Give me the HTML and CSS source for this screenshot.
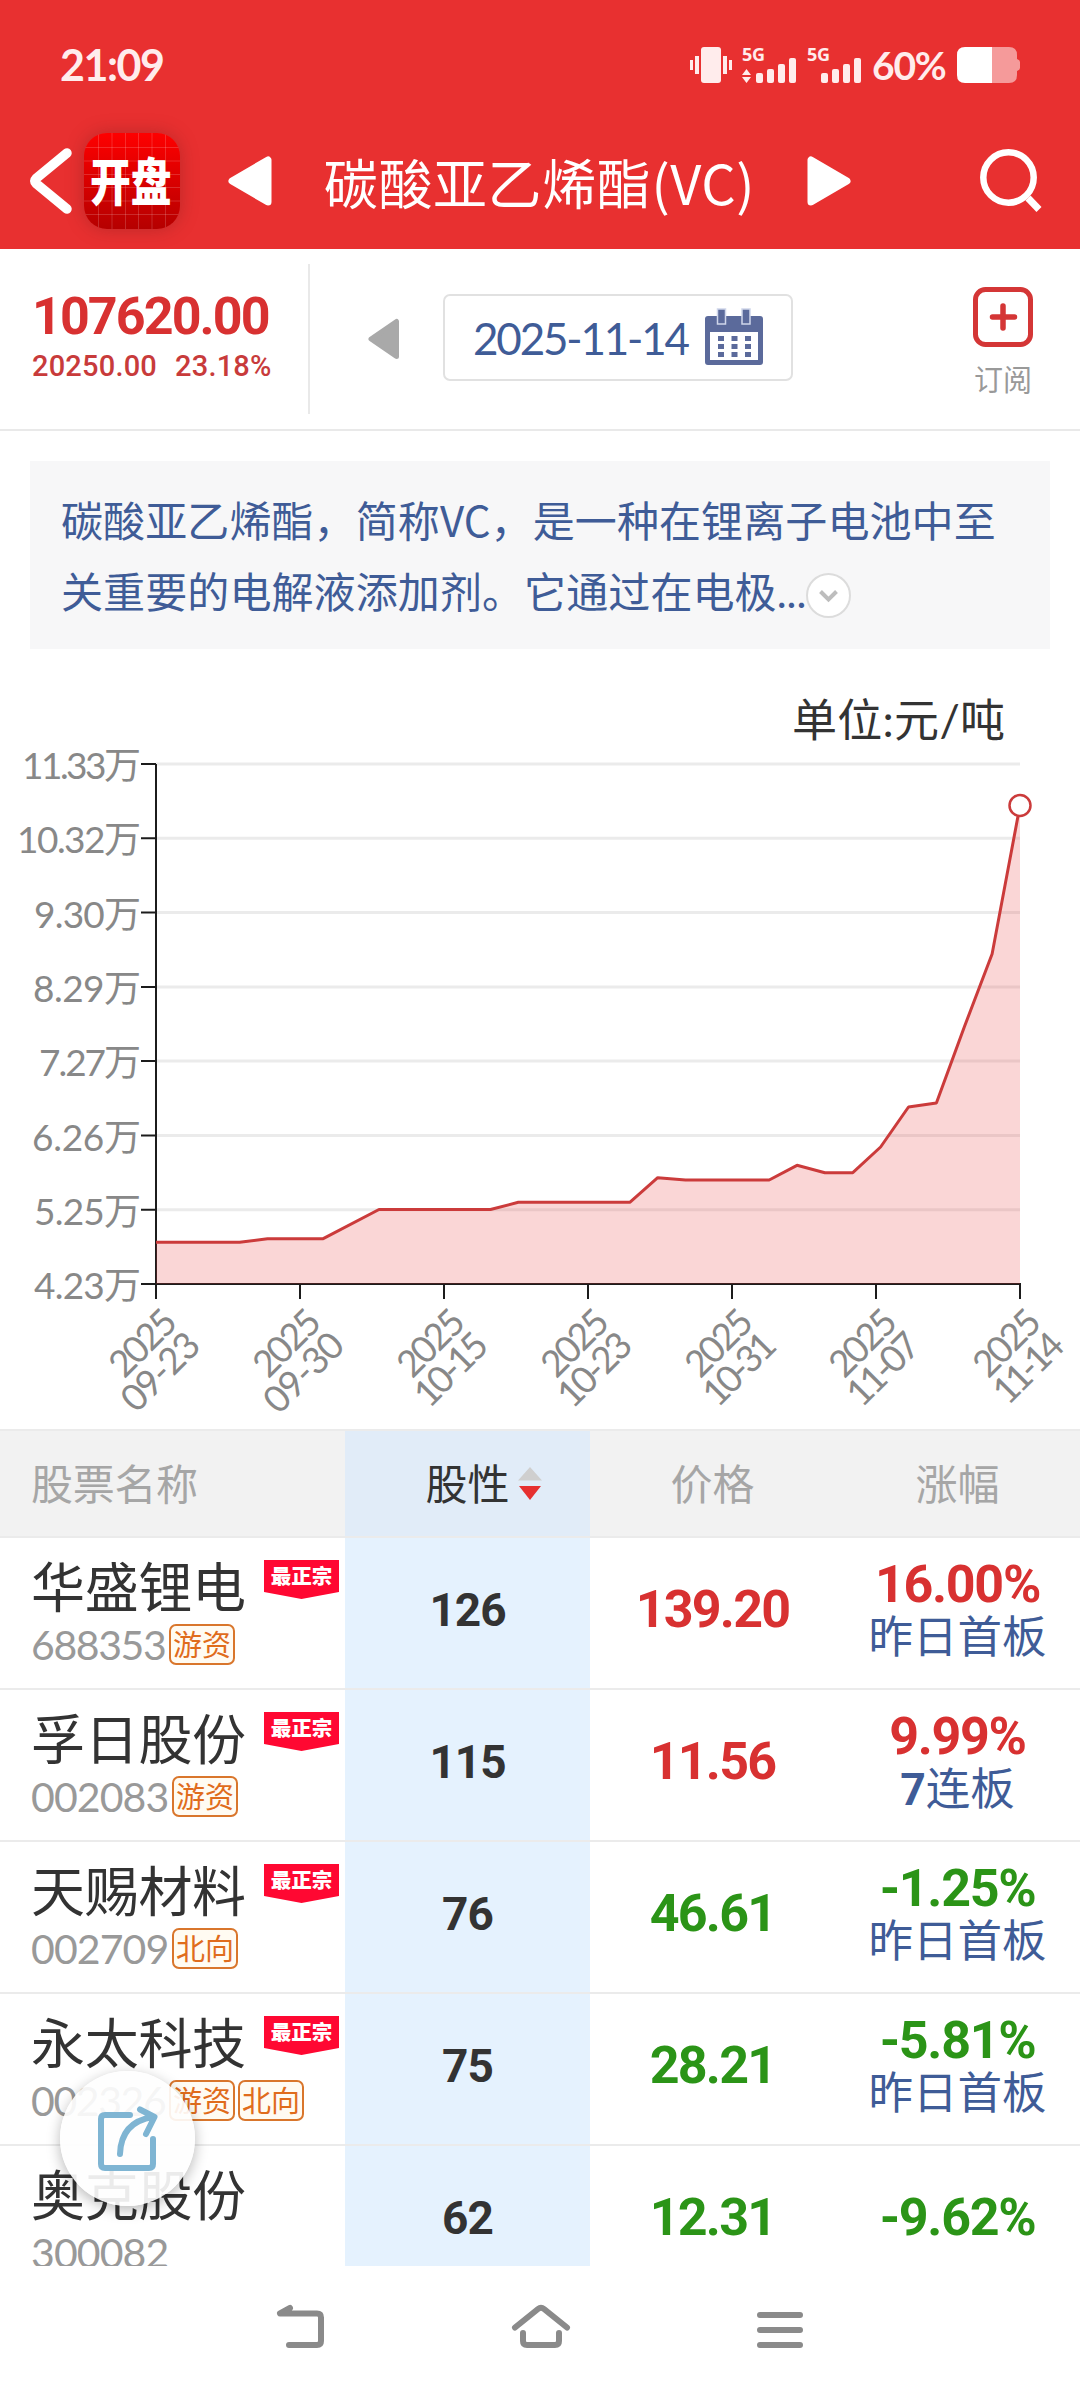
FILE: index.html
```html
<!DOCTYPE html>
<html lang="zh-CN">
<head>
    <meta charset="utf-8">
    <title>碳酸亚乙烯酯(VC)</title>
    <link rel="stylesheet" href="styles.css">
</head>
<body>
    <header class="top">
        <div class="status">
            <span class="clock">21:09</span>
            <svg class="vibrate" width="42" height="36" viewBox="0 0 42 36" fill="#ffecec">
                <rect x="11" y="0" width="20" height="36" rx="3"/>
                <rect x="5" y="9" width="4" height="18"/>
                <rect x="33" y="9" width="4" height="18"/>
                <rect x="0" y="13" width="3" height="10"/>
                <rect x="39" y="13" width="3" height="10"/>
            </svg>
            <svg class="signal" width="54" height="36" viewBox="0 0 54 36" fill="#ffecec">
                <text x="0" y="14" textLength="23">5G</text>
                <path d="M4.500 22l4.500 6h-9zM4.500 36l4.500-6h-9z"/>
                <rect x="14" y="26" width="7" height="10" rx="2"/>
                <rect x="25" y="22" width="7" height="14" rx="2"/>
                <rect x="36" y="17" width="7" height="19" rx="2"/>
                <rect x="47" y="11" width="7" height="25" rx="2"/>
            </svg>
            <svg class="signal" width="54" height="36" viewBox="0 0 54 36" fill="#ffecec">
                <text x="0" y="14" textLength="23">5G</text>
                <rect x="14" y="26" width="7" height="10" rx="2"/>
                <rect x="25" y="22" width="7" height="14" rx="2"/>
                <rect x="36" y="17" width="7" height="19" rx="2"/>
                <rect x="47" y="11" width="7" height="25" rx="2"/>
            </svg>
            <span class="percent">60%</span>
            <svg width="63" height="36" viewBox="0 0 63 36">
                <path d="M35 0h17q8 0 8 8v4q3 1 3 3v6q0 2-3 3v4q0 8-8 8h-17z" fill="#f59a9a"/>
                <path d="M35 0H8Q0 0 0 8v20q0 8 8 8h27z" fill="#fff"/>
            </svg>
        </div>
        <div class="nav">
            <svg class="back" width="42" height="66" viewBox="0 0 42 66">
                <path d="M37 5L6 30.500q-2.500 2.500 0 5L37 61" fill="none" stroke="#fff" stroke-width="9.500" stroke-linecap="round"/>
            </svg>
            <div class="logo">
                <svg width="96" height="96" viewBox="0 0 96 96">
                    <path d="M14.500 0v96M28 0v96M41.500 0v96M54.500 0v96M68 0v96M81.500 0v96M0 14.500h96M0 28h96M0 41.500h96M0 54.500h96M0 68h96M0 81.500h96" stroke="#fff" stroke-opacity=".17"/>
                    <text transform="translate(6 68) scale(.8 1)">开盘</text>
                </svg>
            </div>
            <svg class="prev" width="44" height="50" viewBox="0 0 44 50">
                <path d="M4 25L40 4v42z" fill="#fff" stroke="#fff" stroke-width="7" stroke-linejoin="round"/>
            </svg>
            <h1>碳酸亚乙烯酯(VC)</h1>
            <svg class="next" width="44" height="50" viewBox="0 0 44 50">
                <path d="M40 25L4 4v42z" fill="#fff" stroke="#fff" stroke-width="7" stroke-linejoin="round"/>
            </svg>
            <svg class="search" width="62" height="64" viewBox="0 0 62 64">
                <circle cx="28.500" cy="28.500" r="25.200" fill="none" stroke="#fff" stroke-width="6.500"/>
                <path d="M48 49L59 60.500" stroke="#fff" stroke-width="7"/>
            </svg>
        </div>
    </header>

    <section class="quote">
        <div class="price">
            <div class="last">107620.00</div>
            <div class="change"><span>20250.00</span><span>23.18%</span></div>
        </div>
        <svg class="day-prev" width="32" height="42" viewBox="0 0 32 42">
            <path d="M3 21L28.500 3.500v35z" fill="#a9a9a9" stroke="#a9a9a9" stroke-width="5" stroke-linejoin="round"/>
        </svg>
        <div class="date">
            <span>2025-11-14</span>
            <svg width="58" height="55" viewBox="0 0 58 55" fill="#5b6a9b">
                <path d="M3 6h52q3 0 3 3v43q0 3-3 3H3q-3 0-3-3V9q0-3 3-3zM5 22v28h48V22z" fill-rule="evenodd"/>
                <path d="M12.500-1h8v15h-8zM37-1h8v15h-8z" stroke="#cfd6ea" stroke-width="1.500"/>
                <path d="M13 26h6v5h-6zM26.500 26h6v5h-6zM40 26h6v5h-6zM13 34h6v5h-6zM26.500 34h6v5h-6zM40 34h6v5h-6zM13 42h6v5h-6zM26.500 42h6v5h-6zM40 42h6v5h-6z"/>
            </svg>
        </div>
        <div class="subscribe">
            <svg width="60" height="60" viewBox="0 0 60 60" fill="none" stroke="#d43636">
                <rect x="2.500" y="2.500" width="55" height="55" rx="10" stroke-width="5"/>
                <path d="M30 19v22M19.500 30h22" stroke-width="5.500" stroke-linecap="round"/>
            </svg>
            <span>订阅</span>
        </div>
    </section>

    <section class="intro">
        <p>碳酸亚乙烯酯，简称<span class="latin">VC</span>，是一种在锂离子电池中至<br>关重要的电解液添加剂。它通过在电极<span class="dots">...</span><svg class="more" width="45" height="45" viewBox="0 0 45 45">
                <circle cx="22.500" cy="22.500" r="21.500" fill="#fff" stroke="#dcdcdc" stroke-width="2"/>
                <path d="M14.500 18.500l8 8 8-8" fill="none" stroke="#bdbdbd" stroke-width="4"/>
            </svg></p>
    </section>

    <section class="chart">
        <svg width="1080" height="780" viewBox="0 649 1080 780">
            <text class="unit" x="792" y="737" textLength="213">单位:元/吨</text>
            <path class="grid" d="M156 764h864M156 838.300h864M156 912.600h864M156 986.900h864M156 1061.100h864M156 1135.400h864M156 1209.700h864"/>
            <path class="axis" d="M156 764V1299M141 1284H1021M141 764h15M141 838.300h15M141 912.600h15M141 986.900h15M141 1061.100h15M141 1135.400h15M141 1209.700h15M300 1284v15M444 1284v15M588 1284v15M732 1284v15M876 1284v15M1020 1284v15"/>
            <path class="area" d="M156 1242.300L239.600 1242.300 267.500 1238.700 323.200 1238.700 379 1209.500 490.500 1209.500 518.300 1202.300 629.800 1202.300 657.700 1177.700 685.500 1180 769.200 1180 797 1165.300 824.900 1172.700 852.800 1172.700 880.600 1147 908.500 1107 936.400 1103 964.300 1027 992.100 954 1020 805.500V1284H156z"/>
            <polyline class="line" points="156,1242.300 239.600,1242.300 267.500,1238.700 323.200,1238.700 379,1209.500 490.500,1209.500 518.300,1202.300 629.800,1202.300 657.700,1177.700 685.500,1180 769.200,1180 797,1165.300 824.900,1172.700 852.800,1172.700 880.600,1147 908.500,1107 936.400,1103 964.300,1027 992.100,954 1020,805.500"/>
            <circle class="dot" cx="1020" cy="805.500" r="10.500"/>
            <g class="y-labels">
                <text x="22" y="779" textLength="119">11.33万</text>
                <text x="17" y="853" textLength="124">10.32万</text>
                <text x="34" y="927.500" textLength="107">9.30万</text>
                <text x="33" y="1002" textLength="108">8.29万</text>
                <text x="39" y="1076" textLength="102">7.27万</text>
                <text x="32" y="1150.500" textLength="109">6.26万</text>
                <text x="34" y="1224.500" textLength="107">5.25万</text>
                <text x="34" y="1299" textLength="107">4.23万</text>
            </g>
            <g class="x-labels">
                <g transform="translate(156 1284) rotate(-45)"><text x="-12" y="45" textLength="78">2025</text><text x="-12" y="78" textLength="94">09-23</text></g>
                <g transform="translate(300 1284) rotate(-45)"><text x="-12" y="45" textLength="78">2025</text><text x="-12" y="78" textLength="96">09-30</text></g>
                <g transform="translate(444 1284) rotate(-45)"><text x="-12" y="45" textLength="78">2025</text><text x="-12" y="78" textLength="87">10-15</text></g>
                <g transform="translate(588 1284) rotate(-45)"><text x="-12" y="45" textLength="78">2025</text><text x="-12" y="78" textLength="88">10-23</text></g>
                <g transform="translate(732 1284) rotate(-45)"><text x="-12" y="45" textLength="78">2025</text><text x="-12" y="78" textLength="86">10-31</text></g>
                <g transform="translate(876 1284) rotate(-45)"><text x="-12" y="45" textLength="78">2025</text><text x="-12" y="78" textLength="86">11-07</text></g>
                <g transform="translate(1020 1284) rotate(-45)"><text x="-12" y="45" textLength="78">2025</text><text x="-12" y="78" textLength="83">11-14</text></g>
            </g>
        </svg>
    </section>

    <section class="stocks">
        <div class="row head">
            <div class="name">股票名称</div>
            <div class="score"><span class="sorted">股性
                <svg class="sort" width="24" height="34" viewBox="0 0 24 34">
                    <path d="M12 0l12 13.500H0z" fill="#cfcfcf"/>
                    <path d="M1 19h22L12 33z" fill="#e63030"/>
                </svg></span></div>
            <div class="cost">价格</div>
            <div class="rate">涨幅</div>
        </div>
        <div class="row">
            <div class="name">
                <h2>华盛锂电</h2>
                <p><span class="code short">688353</span><span class="tag">游资</span></p>
                <span class="badge">最正宗</span>
            </div>
            <div class="score">126</div>
            <div class="cost up">139.20</div>
            <div class="rate two up">16.00%<small>昨日首板</small></div>
        </div>
        <div class="row">
            <div class="name">
                <h2>孚日股份</h2>
                <p><span class="code">002083</span><span class="tag">游资</span></p>
                <span class="badge">最正宗</span>
            </div>
            <div class="score">115</div>
            <div class="cost up">11.56</div>
            <div class="rate two up">9.99%<small><b>7</b>连板</small></div>
        </div>
        <div class="row">
            <div class="name">
                <h2>天赐材料</h2>
                <p><span class="code">002709</span><span class="tag">北向</span></p>
                <span class="badge">最正宗</span>
            </div>
            <div class="score">76</div>
            <div class="cost down">46.61</div>
            <div class="rate two down">-1.25%<small>昨日首板</small></div>
        </div>
        <div class="row">
            <div class="name">
                <h2>永太科技</h2>
                <p><span class="code short">002326</span><span class="tag">游资</span><span class="tag">北向</span></p>
                <span class="badge">最正宗</span>
            </div>
            <div class="score">75</div>
            <div class="cost down">28.21</div>
            <div class="rate two down">-5.81%<small>昨日首板</small></div>
        </div>
        <div class="row">
            <div class="name">
                <h2>奥克股份</h2>
                <p><span class="code">300082</span></p>
            </div>
            <div class="score">62</div>
            <div class="cost down">12.31</div>
            <div class="rate down">-9.62%</div>
        </div>
    </section>

    <div class="share">
        <svg width="60" height="66" viewBox="0 0 60 66" fill="none" stroke="#7fb5d3" stroke-width="6" stroke-linecap="round" stroke-linejoin="round">
            <path d="M32 9H7Q3 9 3 13v45q0 4 4 4h44q4 0 4-4V33"/>
            <path d="M22 48Q23 16 55 11M42 3.500L56.500 11 48 28"/>
        </svg>
    </div>

    <footer class="keys">
        <svg width="48" height="44" viewBox="0 0 48 44">
            <path d="M14 4L4 9.500h37q4 0 4 4V37q0 4-4 4H13"/>
        </svg>
        <svg width="58" height="44" viewBox="0 0 58 44">
            <path d="M3 23.500L26 5q3-2.500 6 0L55 23.500M11 29v8q0 4 4 4h28q4 0 4-4v-8"/>
        </svg>
        <svg width="46" height="44" viewBox="0 0 46 44">
            <path d="M3 11h40M3 26h40M3 41h40"/>
        </svg>
    </footer>
</body>
</html>
```

FILE: styles.css
```css
* {
    box-sizing: border-box;
}

body {
    margin: 0;
    width: 1080px;
    height: 2392px;
    overflow: hidden;
    display: flex;
    flex-direction: column;
    background: #fff;
    color: #333;
    font-family: Lato, "Noto Sans CJK SC", sans-serif;
    font-kerning: none;
    position: relative;
}

svg {
    display: block;
    flex: none;
    overflow: visible;
}

h1, h2, p {
    margin: 0;
    font-weight: 400;
}

/* top bar */

.top {
    height: 249px;
    flex: none;
    background: #e83030;
    color: #fff;
}

.status {
    display: flex;
    align-items: center;
    height: 130px;
    padding: 0 60px;
}

.clock {
    color: #ffecec;
    font-size: 43px;
    font-weight: 700;
    letter-spacing: -1.500px;
    flex: 1;
    margin-top: -2px;
}

.vibrate {
    margin-right: 10px;
}

.signal {
    margin-right: 11px;
}

.signal text {
    font: 700 18px/1 "Open Sans", sans-serif;
}

.percent {
    color: #ffecec;
    font-size: 39px;
    font-weight: 700;
    letter-spacing: -1.200px;
    width: 85px;
}

.nav {
    display: flex;
    align-items: center;
    height: 102px;
    padding-left: 30px;
}

.logo {
    width: 96px;
    height: 96px;
    margin-left: 12px;
    border-radius: 23px;
    overflow: hidden;
    background: linear-gradient(#fe0000, #b50000);
    box-shadow: 0 0 18px rgba(120, 30, 30, .4);
}

.logo text {
    font: 900 51px "Noto Sans CJK SC", sans-serif;
    fill: #fff;
}

.prev {
    margin-left: 48px;
}

.nav h1 {
    width: 535px;
    text-align: center;
    font: 400 54px/80px "Noto Sans CJK SC", sans-serif;
    letter-spacing: .6px;
    padding-top: 1px;
}

.search {
    margin-left: 129px;
}

/* price and date */

.quote {
    display: flex;
    align-items: center;
    height: 182px;
    flex: none;
    border-bottom: 2px solid #e9e9e9;
}

.price {
    width: 310px;
    height: 150px;
    padding: 23px 0 0 32px;
    border-right: 2px solid #e9e9e9;
    color: #d83131;
    font-family: Roboto, sans-serif;
}

.last {
    font-size: 52px;
    font-weight: 700;
    line-height: 60px;
    letter-spacing: -1.900px;
}

.change {
    display: flex;
    gap: 18px;
    font-size: 29px;
    font-weight: 500;
    line-height: 38px;
    color: #c83b3b;
}

.change span {
    letter-spacing: .2px;
}

.day-prev {
    margin: 0 43px 0 58px;
}

.date {
    display: flex;
    align-items: center;
    width: 350px;
    height: 87px;
    padding-left: 28px;
    margin-top: -3px;
    border: 2px solid #e1e1e1;
    border-radius: 7px;
    color: #3f5c97;
    font-size: 44px;
}

.date span {
    width: 232px;
    letter-spacing: -2.200px;
}

.subscribe {
    display: flex;
    flex-direction: column;
    align-items: center;
    margin: 8px 0 0 180px;
    font-size: 29px;
    line-height: 40px;
    color: #999;
}

.subscribe span {
    margin-top: 13px;
}

/* intro */

.intro {
    height: 188px;
    flex: none;
    margin: 30px 30px 0;
    padding: 22px 31px 0;
    background: #f7f7f8;
    color: #3f5c97;
    font: 400 42px/71px "Noto Sans CJK SC", sans-serif;
    white-space: nowrap;
    letter-spacing: .1px;
}

.dots {
    font-family: Lato, sans-serif;
    letter-spacing: 0;
}

.more {
    display: inline-block;
    vertical-align: -10px;
}

/* chart */

.chart {
    height: 780px;
    flex: none;
}

.unit {
    font-size: 45px;
    fill: #333;
}

.grid {
    fill: none;
    stroke: #ebebeb;
    stroke-width: 3;
}

.axis {
    fill: none;
    stroke: #1c1c1c;
    stroke-width: 2;
}

.area {
    fill: #e63232;
    fill-opacity: .2;
}

.line {
    fill: none;
    stroke: #cb3b3b;
    stroke-width: 3;
    stroke-linejoin: bevel;
}

.dot {
    fill: #fff;
    stroke: #cb3b3b;
    stroke-width: 2.500;
}

.y-labels, .x-labels {
    font-size: 37px;
    fill: #888;
}

.x-labels {
    text-anchor: end;
}

/* stock list */

.stocks {
    height: 837px;
    flex: none;
    overflow: hidden;
    border-top: 2px solid #ebebeb;
}

.row {
    display: grid;
    grid-template-columns: 345px 245px 245px 245px;
    height: 152px;
    border-bottom: 2px solid #ebebeb;
    text-align: center;
    font-family: Roboto, "Noto Sans CJK SC", sans-serif;
    font-size: 52px;
    font-weight: 700;
    letter-spacing: -1.800px;
    line-height: 144px;
}

.head {
    height: 107px;
    background: #f2f2f2;
    font-size: 42px;
    font-weight: 400;
    line-height: 110px;
    letter-spacing: 0;
    color: #a6a6a6;
}

.name {
    position: relative;
    text-align: left;
    padding-left: 31px;
    letter-spacing: 0;
}

.head .name {
    letter-spacing: -.300px;
}

.score {
    background: #e5f2fe;
    font-size: 46px;
    letter-spacing: -1px;
}

.head .score {
    background: #e1ecf8;
    color: #333;
    font-size: 42px;
    letter-spacing: 0;
}

.row > div {
    height: 150px;
}

.head > div {
    height: 105px;
}

.sorted {
    position: relative;
}

.sort {
    position: absolute;
    left: 93px;
    top: 6px;
}

.name h2 {
    font-size: 54px;
    line-height: 60px;
    letter-spacing: -.300px;
    padding-top: 22px;
}

.name p {
    display: flex;
    align-items: center;
    margin-top: 3px;
    height: 43px;
    font-family: Lato, "Noto Sans CJK SC", sans-serif;
}

.code {
    width: 141px;
    color: #999;
    font-size: 41px;
    font-weight: 400;
    line-height: 43px;
    letter-spacing: -.900px;
}

.short {
    width: 138px;
    letter-spacing: -1.400px;
}

.tag {
    width: 66px;
    height: 41px;
    margin-right: 3px;
    border: 2px solid #d9762c;
    border-radius: 7px;
    background: #fffbf2;
    color: #e06c1c;
    font-size: 29px;
    font-weight: 400;
    line-height: 37px;
    text-align: center;
    flex: none;
}

.badge {
    position: absolute;
    left: 264px;
    top: 22px;
    width: 75px;
    height: 39px;
    background: #ff0832;
    clip-path: polygon(0 0, 100% 0, 100% 82%, 50% 100%, 0 82%);
    color: #fff;
    font-size: 20.500px;
    font-weight: 900;
    line-height: 35px;
    text-align: center;
}

.rate.two {
    display: flex;
    flex-direction: column;
    padding-top: 17px;
    line-height: 60px;
}

.rate {
    letter-spacing: -1.300px;
}

.head .rate {
    letter-spacing: 0;
}

.rate small {
    font-size: 44.500px;
    font-weight: 400;
    line-height: 47px;
    letter-spacing: 0;
    color: #3f5c97;
}

.up {
    color: #d83131;
}

.down {
    color: #2b9417;
}

/* floating share button */

.share {
    position: absolute;
    left: 60px;
    top: 2071px;
    width: 135px;
    height: 135px;
    padding: 35px 0 0 38px;
    border-radius: 50%;
    background: rgba(254, 254, 254, .91);
    box-shadow: 0 4px 14px rgba(0, 0, 0, .28);
}

/* system keys */

.keys {
    display: flex;
    justify-content: space-between;
    height: 126px;
    padding: 38px 277px 0 276px;
    background: #fff;
}

.keys path {
    fill: none;
    stroke: #8a8a8a;
    stroke-width: 6;
    stroke-linecap: round;
    stroke-linejoin: round;
}
```
